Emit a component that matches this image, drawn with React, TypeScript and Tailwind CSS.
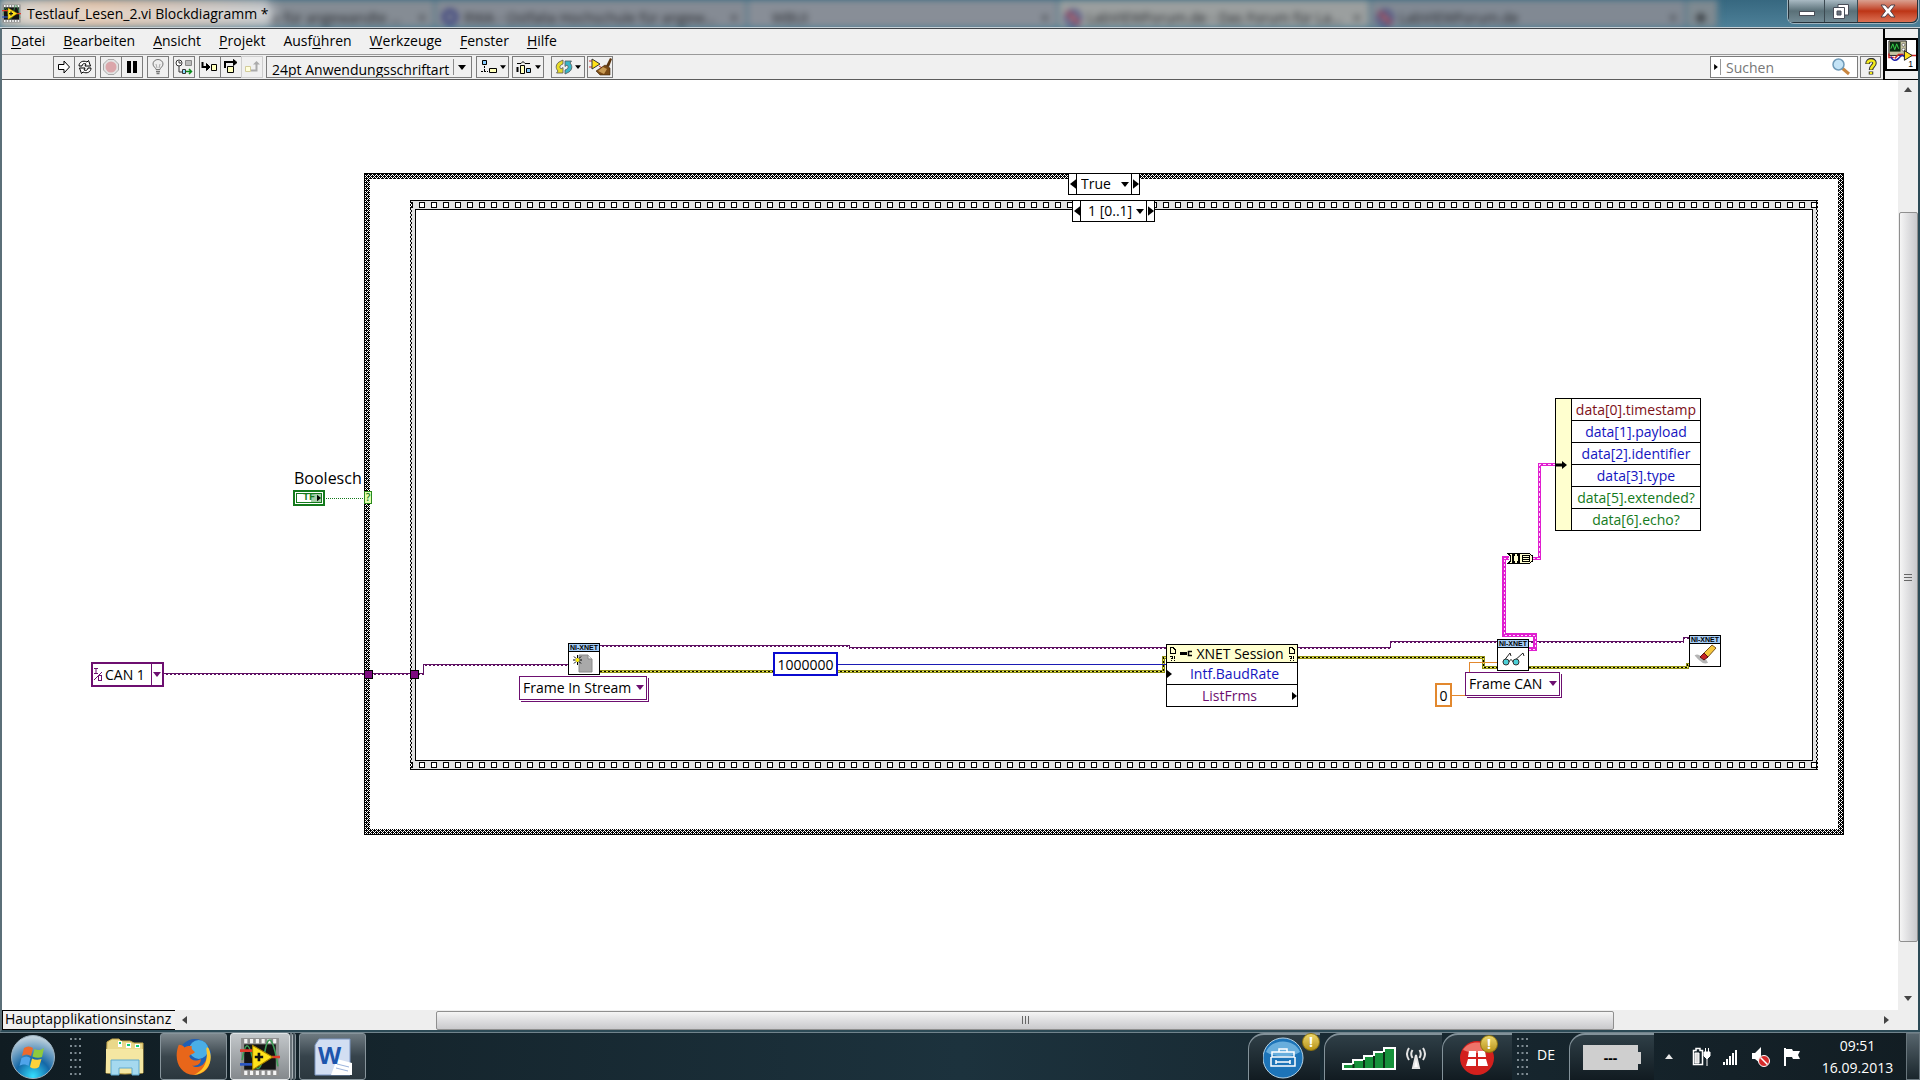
import type { ReactNode } from 'react';
import clsx from 'clsx';

const PURPLE = '#6d0f70';

const menus = [
  ['', 'D', 'atei'],
  ['', 'B', 'earbeiten'],
  ['', 'A', 'nsicht'],
  ['', 'P', 'rojekt'],
  ['Ausf', 'ü', 'hren'],
  ['', 'W', 'erkzeuge'],
  ['', 'F', 'enster'],
  ['', 'H', 'ilfe'],
];

const fields = [
  { name: 'data[0].timestamp', color: 'text-[#7d1018]' },
  { name: 'data[1].payload', color: 'text-[#1414c0]' },
  { name: 'data[2].identifier', color: 'text-[#1414c0]' },
  { name: 'data[3].type', color: 'text-[#1414c0]' },
  { name: 'data[5].extended?', color: 'text-[#147a1c]' },
  { name: 'data[6].echo?', color: 'text-[#147a1c]' },
];

function Tri({ dir, className }: { dir: 'up' | 'down' | 'left' | 'right'; className?: string }) {
  const d = {
    up: 'M0 5 L4 0 L8 5Z',
    down: 'M0 0 L8 0 L4 5Z',
    left: 'M5 0 L0 4 L5 8Z',
    right: 'M0 0 L5 4 L0 8Z',
  }[dir];
  const wide = dir === 'up' || dir === 'down';
  return (
    <svg
      width={wide ? 8 : 5}
      height={wide ? 5 : 8}
      viewBox={wide ? '0 0 8 5' : '0 0 5 8'}
      className={clsx('shrink-0', className)}
      fill="currentColor"
    >
      <path d={d} />
    </svg>
  );
}

function LabViewIcon({ size }: { size: number }) {
  return (
    <svg width={size} height={size} viewBox="0 0 38 38" className="shrink-0">
      <rect x="1" y="1" width="36" height="36" fill="#8d8d8d" />
      <rect x="4" y="7" width="30" height="24" fill="#141414" />
      <path d="M4 4H36M4 34H36" stroke="#f4f4f4" strokeWidth="4" strokeDasharray="3 2.5" />
      <path d="M2 22C5 4 8 4 12 20S20 32 24 12S33 8 36 28" stroke="#3e9c57" strokeWidth="1.5" fill="none" />
      <path d="M0 13H12M30 19H38" stroke="#e03a2c" strokeWidth="2.5" />
      <path d="M0 26H12" stroke="#2b56c4" strokeWidth="2.5" />
      <path d="M12 8V31L31 19Z" fill="#ffe21a" stroke="#a88400" />
      <path d="M14 19H22M18 15V23" stroke="#111" strokeWidth="2.5" />
    </svg>
  );
}

/* ---------- title bar ---------- */

function BrowserMark() {
  return (
    <svg width="20" height="18" viewBox="0 0 20 18" className="shrink-0">
      <circle cx="10" cy="9" r="7" fill="none" stroke="#3a3c7c" strokeWidth="3" />
      <path d="M4 3 16 15" stroke="#a04358" strokeWidth="4" />
    </svg>
  );
}

function BrowserTab({ label, className, icon, close = true }: { label: string; className: string; icon?: ReactNode; close?: boolean }) {
  return (
    <div className={clsx('flex h-[27px] shrink-0 items-center gap-1 overflow-hidden border-r-2 border-[#4b7488] px-1 pt-2', className)}>
      {icon}
      <span className="grow whitespace-nowrap">{label}</span>
      {close && <span className="pr-1">×</span>}
    </div>
  );
}

function TitleBar() {
  return (
    <header className="relative flex h-7 shrink-0 items-center overflow-hidden border-b border-[#c8d2d8] bg-linear-to-b from-[#376880] to-[#4d8098]">
      <div aria-hidden className="absolute inset-0 flex items-end text-[14px] text-[#23262b] blur-[3px]">
        <div className="h-7 w-[268px] shrink-0 bg-linear-to-r from-[#b9b9b5] via-[#d0ab8c] via-35% to-[#a0a6ab]" />
        <BrowserTab className="w-[168px] bg-[#858c94]" label="e für angewandte ..." />
        <BrowserTab
          className="w-[312px] bg-[#858b94]"
          label="RWA - Ostfalia Hochschule für angew..."
          icon={<svg width="20" height="18" className="shrink-0"><circle cx="10" cy="8" r="6" fill="none" stroke="#343a7c" strokeWidth="4" /></svg>}
        />
        <BrowserTab className="w-[311px] bg-[#888e97] pl-6" label="WBUI" />
        <BrowserTab className="w-[312px] bg-[#9b9f9f]" label="LabVIEWForum.de - Das Forum für La..." icon={<BrowserMark />} />
        <BrowserTab className="w-[316px] bg-[#818993]" label="LabVIEWForum.de" icon={<BrowserMark />} />
        <BrowserTab className="w-[32px] bg-[#7f8a91] pl-2" label="✚" close={false} />
      </div>
      <div className="absolute top-1 left-4 h-5 w-[260px] rounded-full bg-white/50 blur-[6px]" />
      <div className="relative flex items-center gap-1 pl-0.5 text-[14px] leading-5 text-black">
        <LabViewIcon size={19} />
        <h1 className="pl-0.5">Testlauf_Lesen_2.vi Blockdiagramm *</h1>
      </div>
      <div className="relative mr-0.5 ml-auto flex h-[23px] self-start rounded-b-md border border-t-0 border-[#26323a] shadow-[0_0_0_1px_#9fb4bf]">
        <button aria-label="Minimieren" className="flex w-9 items-end justify-center border-r border-[#3c4a52] bg-linear-to-b from-[#a9bac3] via-[#5a7078] to-[#728a94] pb-1.5">
          <span className="h-[5px] w-4 border border-[#4a4f58] bg-white" />
        </button>
        <button aria-label="Wiederherstellen" className="flex w-[33px] items-center justify-center border-r border-[#3c4a52] bg-linear-to-b from-[#a9bac3] via-[#5a7078] to-[#728a94]">
          <svg width="18" height="17" fill="none">
            <path d="M6 1.500H16.500V12H6Z" fill="#fff" stroke="#484d58" />
            <path d="M1.500 4.500H12.500V15.500H1.500Z" fill="#fff" stroke="#484d58" />
            <path d="M5 8H9V12H5Z" fill="#68727c" stroke="#484d58" />
          </svg>
        </button>
        <button aria-label="Schließen" className="flex w-[59px] items-center justify-center rounded-br-md bg-linear-to-b from-[#d9a090] via-[#bd3414] to-[#dc7052]">
          <svg width="16" height="14" viewBox="0 0 16 14">
            <path d="M1 1H5L8 4.500 11 1H15L10.500 7 15 13H11L8 9.500 5 13H1L5.500 7Z" fill="#fff" stroke="#4d4048" />
          </svg>
        </button>
      </div>
    </header>
  );
}

/* ---------- menu and toolbar ---------- */

function ToolButton({ label, className, children }: { label: string; className?: string; children: ReactNode }) {
  return (
    <button aria-label={label} className={clsx('flex h-[22px] items-center justify-center gap-0.5 border border-[#7c7c7c] bg-[#f0f0f0]', className)}>
      {children}
    </button>
  );
}

function Toolbar() {
  return (
    <div className="flex h-[25px] items-center border-b border-[#5c5c5c] pl-[51px]">
      <ToolButton label="Ausführen" className="w-[22px]">
        <svg width="14" height="14" fill="#fff" stroke="#000"><path d="M1.500 4.500H7V1L12.500 7 7 13V9.500H1.500Z" /></svg>
      </ToolButton>
      <ToolButton label="Wiederholt ausführen" className="-ml-px w-[22px]">
        <svg width="16" height="16" fill="#fff" stroke="#000">
          <path d="M2 7C2 3 6 1 10 3L11.500 1.500 13.500 7H8L9 5C7 4 5 5 5 7Z" />
          <path d="M14 9C14 13 10 15 6 13L4.500 14.500 2.500 9H8L7 11C9 12 11 11 11 9Z" />
        </svg>
      </ToolButton>
      <ToolButton label="Abbrechen" className="ml-1 w-[22px]">
        <svg width="16" height="16"><path d="M5 .500H11L15.500 5V11L11 15.500H5L.500 11V5Z" fill="#e2e2e2" stroke="#a9a9a9" /><circle cx="8" cy="8" r="5.500" fill="#dba6aa" /></svg>
      </ToolButton>
      <ToolButton label="Pause" className="-ml-px w-[22px]">
        <svg width="10" height="12"><path d="M0 0H4V12H0ZM6 0H10V12H6Z" /></svg>
      </ToolButton>
      <ToolButton label="Highlight-Funktion" className="ml-1 w-[22px]">
        <svg width="12" height="16" stroke="#777"><path d="M4 10.500C4 8.500 1 8 1 5A5 4.500 0 0 1 11 5C11 8 8 8.500 8 10.500Z" fill="#eee" /><path d="M4 12.500H8M4.500 14.500H7.500" strokeWidth="1.500" /><path d="M4 5 5 9M8 5 7 9" stroke="#aaa" /></svg>
      </ToolButton>
      <ToolButton label="Verbindungswerte beibehalten" className="ml-1 w-[22px]">
        <svg width="18" height="16" fill="none" stroke="#333">
          <circle cx="4" cy="4" r="3" fill="#fff" /><path d="M4 2V4H6M4 7V13H7" /><path d="M10.500 1.500H16.500V6.500H10.500Z" fill="#bbb" stroke="#888" />
          <path d="M7.500 10.500H10.500V14.500H7.500Z" fill="#8df" /><path d="M11 12.500H16M14 10L16.500 12.500 14 15" stroke="#0a8a1a" strokeWidth="1.500" />
        </svg>
      </ToolButton>
      <ToolButton label="Hineinspringen" className="ml-1 w-[22px]">
        <svg width="18" height="14" fill="none" stroke="#000"><path d="M1.500 2V7H7" strokeWidth="2" /><path d="M5.500 3.500 9 7 5.500 10.500Z" fill="#000" /><path d="M10.500 4.500H15.500V10.500H10.500Z" fill="#ffb" /></svg>
      </ToolButton>
      <ToolButton label="Überspringen" className="-ml-px w-[22px]">
        <svg width="16" height="16" fill="none" stroke="#000"><path d="M2 9V3H11" strokeWidth="2" /><path d="M10.500 .500 14 3.500 10.500 6.500Z" fill="#000" /><path d="M4.500 7.500H10.500V13.500H4.500Z" fill="#ffb" /></svg>
      </ToolButton>
      <ToolButton label="Herausspringen" className="-ml-px w-[22px] border-[#cdcdcd]">
        <svg width="16" height="14" fill="none" stroke="#aaa"><path d="M1.500 6.500H6.500V11.500H1.500Z" fill="#ffd" stroke="#d3cc9a" /><path d="M7 10.500H12.500V4" strokeWidth="2" /><path d="M9 4.500 12.500 1 16 4.500Z" fill="#aaa" stroke="none" /></svg>
      </ToolButton>
      <div className="relative ml-[3px] h-[22px] w-[206px] overflow-hidden border border-[#7c7c7c] bg-[#f0f0f0]">
        <select aria-label="Schriftart" className="h-6 w-full appearance-none pt-0.5 pl-[5px] text-[14px] leading-5 outline-none">
          <option>24pt Anwendungsschriftart</option>
        </select>
        <span className="pointer-events-none absolute inset-y-0.5 right-0 flex w-[18px] items-center border-l border-[#8c8c8c] pl-1"><Tri dir="down" /></span>
      </div>
      <ToolButton label="Objekte ausrichten" className="ml-1 w-[33px]">
        <svg width="18" height="16" stroke="#000" fill="none"><path d="M2.500 1.500H6.500V5.500H2.500Z" fill="#8cf" /><path d="M4.500 7V13M1 12.500H8" strokeDasharray="2 1" /><path d="M9.500 9.500H16.500V13.500H9.500Z" fill="#ffb" /></svg>
        <Tri dir="down" className="h-1 w-1.5" />
      </ToolButton>
      <ToolButton label="Objekte einreihen" className="ml-[3px] w-8">
        <svg width="18" height="16" stroke="#000" fill="none"><path d="M2 4.500H6L8 2.500 10 4.500H15" /><path d="M2.500 8V13" strokeWidth="2" /><path d="M5.500 6.500H9.500V14.500H5.500Z" fill="#ffb" /><path d="M11.500 9.500H15.500V13.500H11.500Z" fill="#8cf" /></svg>
        <Tri dir="down" className="h-1 w-1.5" />
      </ToolButton>
      <ToolButton label="Neu anordnen" className="ml-[7px] w-[34px]">
        <svg width="18" height="16" stroke="#555" strokeWidth=".8">
          <path d="M8 1 4 3C1 5 0 9 3 12L1.500 14H8V8.500L6 10C4 8 5 6 8 5Z" fill="#e8dc2a" />
          <path d="M10 15 14 13C17 11 18 7 15 4L16.500 2H10V7.500L12 6C14 8 13 10 10 11Z" fill="#38b6c8" />
        </svg>
        <Tri dir="down" className="h-1 w-1.5" />
      </ToolButton>
      <ToolButton label="Diagramm aufräumen" className="ml-0.5 w-[26px]">
        <svg width="23" height="18"><path d="M0 3H6M0 9H5M10 8 20 14" stroke="#c33" /><path d="M17 8 21 0 23 1 20 9Z" fill="#5b350e" /><path d="M10 11 16 7 21 10 21 17 11 17 7 13Z" fill="#7a4a14" stroke="#3d2409" strokeWidth=".6" /><path d="M9 13 14 9 18 11 15 16Z" fill="#c89a52" /><path d="M3 1 11 6 3 11Z" fill="#ffe21a" stroke="#333" /></svg>
      </ToolButton>
      <form role="search" className="ml-auto flex items-center">
        <div className="flex h-[22px] w-[148px] items-center border border-[#7c7c7c] bg-white">
          <span className="flex h-4 w-2.5 items-center justify-center border-r border-[#999]"><Tri dir="right" className="h-1.5 w-1" /></span>
          <input aria-label="Suchen" placeholder="Suchen" className="w-0 grow pt-0.5 pl-[5px] text-[14px] leading-5 outline-none placeholder:text-[#777]" />
          <svg width="20" height="18" className="mr-1.5"><path d="M11 10 18 16" stroke="#c98640" strokeWidth="3" /><circle cx="7.500" cy="6.500" r="5.500" fill="#c3e3f6" stroke="#6f9ab8" strokeWidth="1.500" /></svg>
        </div>
        <button type="button" aria-label="Kontexthilfe" className="mx-0.5 flex h-[22px] w-[21px] items-center justify-center border border-[#7c7c7c]">
          <svg width="12" height="18" fill="none"><path d="M2.500 6C2.500 1 9.500 1 9.500 5 9.500 8 6 8 6 12M6 13.500V16.500" stroke="#333" strokeWidth="4.500" /><path d="M2.500 5.500C2.500 1.500 9.500 1.500 9.500 5 9.500 8 6 8 6 11.500M6 14V16" stroke="#f2ea1c" strokeWidth="2.500" /></svg>
        </button>
      </form>
    </div>
  );
}

function MenuArea() {
  return (
    <div className="flex shrink-0 border-t border-[#3f4449] bg-[#f0f0f0]">
      <div className="grow">
        <nav className="flex h-[26px] items-center border-b border-[#9a9a9a] pb-0.5">
          {menus.map(([pre, key, post]) => (
            <button key={key} className="px-[9px] text-[14px] leading-5">{pre}<span className="underline underline-offset-2">{key}</span>{post}</button>
          ))}
        </nav>
        <Toolbar />
      </div>
      <div className="flex w-[35px] items-center border-b border-l-2 border-black">
        <svg width="33" height="33" className="border-2 border-black bg-white" viewBox="0 0 30 30">
          <path d="M2 1H20V16H2Z" fill="#c6c3a2" stroke="#222" />
          <path d="M3 2H14V12H3Z" fill="#0a2a12" />
          <path d="M4 9 6 4 8 10 10 4 12 9" stroke="#37d24a" fill="none" />
          <circle cx="17" cy="5" r="1.500" fill="#fff" stroke="#222" strokeWidth=".5" /><circle cx="17" cy="10" r="1.500" fill="#fff" stroke="#222" strokeWidth=".5" />
          <path d="M2 14V18H7M20 16H30M8 19 12 15 17 15" stroke="#c22" fill="none" strokeWidth="1.500" />
          <path d="M4 17C6 22 9 22 12 19S15 15 18 17" stroke="#22a" fill="none" strokeWidth="1.500" />
          <path d="M18 11V21L26 16Z" fill="#ffe21a" stroke="#222" />
          <text x="22" y="28" fontSize="9" fontFamily="Liberation Sans">1</text>
        </svg>
      </div>
    </div>
  );
}

/* ---------- block diagram ---------- */

function Wire({ d, kind }: { d: string; kind: 'session' | 'error' | 'cluster' | 'cluster-thin' }) {
  if (kind === 'session') {
    return (
      <g fill="none" stroke="#5e1062" strokeWidth="1">
        <path d={d} />
        <path d={d} strokeDasharray="2 2" strokeDashoffset="2" transform="translate(0 1)" />
      </g>
    );
  }
  if (kind === 'error') {
    return (
      <g fill="none">
        <path d={d} stroke="#8f8e14" strokeWidth="3" />
        <path d={d} stroke="#e6e65a" strokeWidth="1" />
        <path d={d} stroke="#000" strokeWidth="1" strokeDasharray="2 2" />
      </g>
    );
  }
  return (
    <g fill="none">
      <path d={d} stroke="#e01fd0" strokeWidth={kind === 'cluster' ? 4 : 3} />
      <path d={d} stroke="#ffd9fb" strokeWidth="1" strokeDasharray={kind === 'cluster' ? '2 2' : '3 2'} />
    </g>
  );
}

function Wires() {
  return (
    <svg width="1900" height="800" className="pointer-events-none absolute top-0 left-0" shapeRendering="crispEdges">
      <path d="M326 418.500H364" stroke="#147a1c" strokeDasharray="1 1" />
      <Wire kind="session" d="M164 593.500H423.500V584.500H568" />
      <rect x="364.500" y="590.500" width="8" height="8" fill="#7d0a80" stroke="#000" />
      <rect x="410.500" y="590.500" width="8" height="8" fill="#7d0a80" stroke="#000" />
      <Wire kind="session" d="M600 565.500H849.500V567.500H1166" />
      <Wire kind="error" d="M600 591.500H1163.500V577.500H1166" />
      <path d="M838 584.500H1166" stroke="#1b1bb4" />
      <Wire kind="session" d="M1298 567.500H1390.500V561.500H1497" />
      <Wire kind="error" d="M1298 577.500H1483.500V587.500H1497" />
      <Wire kind="session" d="M1529 561.500H1683.500V557.500H1689" />
      <Wire kind="error" d="M1529 587.500H1687.500V584.500H1689" />
      <path d="M1452 615.500H1469.500V582.500H1497" stroke="#e2882e" fill="none" />
      <Wire kind="cluster" d="M1529 569H1535V555H1504V478H1509" />
      <Wire kind="cluster-thin" d="M1532 478.500H1539.500V384.500H1555" />
      <path d="M1508 473.500H1529L1532.500 476V481L1529 483.500H1508L1510.500 481V476Z" fill="#ffffcf" stroke="#000" />
      <path d="M1515 475H1513V482H1515M1517 475H1519V482H1517" fill="none" stroke="#000" strokeWidth="2" />
      <path d="M1522.500 475.500H1529.500V481.500H1522.500ZM1522 477.500H1530M1522 479.500H1530" fill="none" stroke="#000" />
    </svg>
  );
}

function Structures() {
  return (
    <svg width="1900" height="800" className="pointer-events-none absolute top-0 left-0" shapeRendering="crispEdges">
      <defs>
        <pattern id="hatch" width="4" height="4" patternUnits="userSpaceOnUse">
          <rect width="4" height="4" fill="#fff" />
          <path d="M0 0H2V1H0ZM3 0H4V1H3ZM0 1H1V2H0ZM2 1H3V2H2ZM1 2H4V3H1ZM0 3H1V4H0ZM2 3H3V4H2Z" />
        </pattern>
        <pattern id="film-top" x="419" y="120" width="12" height="10" patternUnits="userSpaceOnUse">
          <rect x=".5" y="2.500" width="5" height="5" fill="#fff" stroke="#000" />
        </pattern>
        <pattern id="film-bottom" x="419" y="680" width="12" height="10" patternUnits="userSpaceOnUse">
          <rect x=".5" y="2.500" width="5" height="5" fill="#fff" stroke="#000" />
        </pattern>
      </defs>
      <rect x="367" y="96" width="1474" height="656" fill="none" stroke="url(#hatch)" strokeWidth="6" />
      <rect x="364.500" y="93.500" width="1479" height="661" fill="none" stroke="#000" />
      <path d="M410 120H1818V130H410ZM410 680H1818V690H410ZM410 130H416V680H410ZM1812 130H1818V680H1812Z" fill="#e1e1e1" />
      <rect x="410" y="120" width="1408" height="10" fill="url(#film-top)" />
      <rect x="410" y="680" width="1408" height="10" fill="url(#film-bottom)" />
      <path d="M410 120.500H1818M410 689.500H1818" stroke="#000" />
      <rect x="415.500" y="129.500" width="1397" height="551" fill="none" stroke="#000" />
      <path d="M410.500 120V690M1816.500 120V690" stroke="#000" strokeDasharray="2 2" />
      <path d="M411.500 122V690M1817.500 122V690" stroke="#000" strokeDasharray="2 2" />
    </svg>
  );
}

function Selector({ label, value, className, pad }: { label: string; value: string; className: string; pad: string }) {
  return (
    <div className={clsx('absolute flex h-[22px] border border-black bg-white', className)}>
      <button aria-label="Vorheriger Rahmen" className="flex w-[7px] items-center justify-center"><Tri dir="left" className="h-2.5 w-1.5" /></button>
      <div className="relative grow border-x border-black">
        <select aria-label={label} className={clsx('block h-5 w-full appearance-none text-[14px] leading-[18px] outline-none', pad)}><option>{value}</option></select>
        <Tri dir="down" className="pointer-events-none absolute top-2 right-0.5" />
      </div>
      <button aria-label="Nächster Rahmen" className="flex w-[7px] items-center justify-center"><Tri dir="right" className="h-2.5 w-1.5" /></button>
    </div>
  );
}

function EnumConstant({ label, value, className }: { label: string; value: string; className: string }) {
  return (
    <div className={clsx('absolute h-6 border border-[#6d0f70] bg-white shadow-[1px_1px_0_#fff,2px_2px_0_#6d0f70]', className)}>
      <select aria-label={label} className="block h-[22px] w-full appearance-none pl-[3px] text-[14px] leading-5 outline-none"><option>{value}</option></select>
      <Tri dir="down" className="pointer-events-none absolute top-2 right-0.5 text-[#6d0f70]" />
    </div>
  );
}

function XnetNode({ className, children }: { className: string; children: ReactNode }) {
  return (
    <div className={clsx('absolute flex h-8 w-8 flex-col border border-black bg-white', className)}>
      <span className="h-2 border-b border-black bg-[#a5cdf6] text-center font-['Liberation_Sans',sans-serif] text-[7px] leading-[7px] font-bold">NI-XNET</span>
      <svg width="30" height="22" viewBox="0 0 30 22">{children}</svg>
    </div>
  );
}

function DocMark() {
  return (
    <svg width="7" height="14" fill="none" stroke="#000" shapeRendering="crispEdges">
      <path d="M1.500 .500H4L6.500 3V6.500H1.500ZM1 9.500H3.500V11H2.500V12M2.500 13V14M5.500 9V12M5.500 13V14" />
    </svg>
  );
}

function Diagram() {
  return (
    <main className="relative grow overflow-hidden bg-white">
      <div className="absolute inset-y-0 right-0 -left-0.5">
        <Structures />
        <Wires />
        <Selector label="Case" value="True" pad="pl-1" className="top-[93px] left-[1068px] w-[72px]" />
        <Selector label="Sequenz" value="1 [0..1]" pad="pl-[7px]" className="top-[120px] left-[1072px] w-[83px]" />

        <div className="absolute top-[386px] left-[293px] flex flex-col">
          <span className="pl-px text-[16px] leading-6">Boolesch</span>
          <span className="flex h-4 w-8 border-2 border-[#147a1c] p-px">
            <span className="flex grow items-center justify-end border border-[#147a1c] bg-linear-to-r from-white from-60% to-[#a6cfa8] to-60% font-['Liberation_Mono',monospace] text-[10px] leading-2 font-bold text-[#147a1c]">TF<Tri dir="right" className="ml-0.5 w-1 text-black" /></span>
          </span>
        </div>
        <span className="absolute top-[411px] left-[364px] flex h-[13px] w-2 items-center justify-center border border-[#2a8a1c] bg-[#e2ffb0] text-[10px] font-semibold text-[#147a1c]">?</span>

        <div className="absolute top-[582px] left-[91px] flex h-[25px] w-[73px] items-center border-2 border-[#6d0f70] bg-white">
          <svg width="10" height="16" className="shrink-0" fill="none" stroke={PURPLE}><path d="M1 1.500H5M3 1.500V7M1 6.500H5M1 13 9 5" /><rect x="5.500" y="8.500" width="3" height="5" /></svg>
          <select aria-label="XNET-Interface" className="h-full w-0 grow appearance-none pl-0.5 text-[14px] leading-5 outline-none"><option>CAN 1</option></select>
          <span className="flex h-full w-[11px] items-center justify-center border-l border-[#6d0f70] text-[#6d0f70]"><Tri dir="down" /></span>
        </div>

        <XnetNode className="top-[563px] left-[568px]">
          <path d="M10 3H19L23 7V20H10Z" fill="#a9a9a9" stroke="#8a8a8a" /><path d="M19 3V7H23" fill="#eee" stroke="#888" />
          <circle cx="8.500" cy="8" r="2" fill="#fff200" /><path d="M8.500 3V6M8.500 10V13M4 8H6.500M10.500 8H13M5 4.500 7 6.500M12 4.500 10 6.500M5 11.500 7 9.500M12 11.500 10 9.500" stroke="#000" />
        </XnetNode>
        <EnumConstant label="Modus" value="Frame In Stream" className="top-[596px] left-[519px] w-32" />
        <input aria-label="Baudrate" defaultValue="1000000" className="absolute top-[572px] left-[773px] h-6 w-[65px] border-2 border-[#0b0bd0] bg-white text-center text-[14px] leading-5 outline-none" />

        <div className="absolute top-[564px] left-[1166px] w-[132px] border border-black bg-white text-center text-[14px]">
          <div className="flex h-[17px] items-center justify-between bg-[#ffffcf] px-0.5">
            <DocMark />
            <span className="flex items-center gap-1 leading-[17px]">
              <svg width="12" height="7" fill="none" stroke="#000"><path d="M0 3.500H7" strokeWidth="3" /><path d="M12 1.500H8.500V5.500H12" strokeWidth="1.500" /></svg>
              XNET Session
            </span>
            <DocMark />
          </div>
          <div className="flex h-[22px] items-center border-t border-black leading-5 text-[#1414c0]"><Tri dir="right" className="text-black" /><span className="grow">Intf.BaudRate</span></div>
          <div className="flex h-[22px] items-center border-t border-black leading-5 text-[#6d0f70]"><span className="grow">ListFrms</span><Tri dir="right" className="text-black" /></div>
        </div>

        <XnetNode className="top-[559px] left-[1497px]">
          <path d="M5 14 12 5 13 8M15 14 25 5 26 8M11 14C12 11 14 11 15 14" stroke="#222" fill="none" />
          <circle cx="8" cy="14" r="3" fill="#4ccfd6" stroke="#333" /><circle cx="18" cy="14" r="3" fill="#4ccfd6" stroke="#333" />
        </XnetNode>
        <EnumConstant label="Frametyp" value="Frame CAN" className="top-[592px] left-[1465px] w-[95px]" />
        <input aria-label="Timeout" defaultValue="0" className="absolute top-[603px] left-[1435px] h-6 w-[17px] border-2 border-[#e2882e] bg-white text-center text-[14px] leading-5 outline-none" />
        <XnetNode className="top-[555px] left-[1689px]">
          <path d="M6 13C9 10 12 20 17 17" stroke="#b5b5b5" strokeWidth="4" fill="none" />
          <path d="M13 10 22 1 26 4 17 14Z" fill="#f5c63c" stroke="#79541a" /><path d="M10 13 14 9 18 13 14 16Z" fill="#c62323" stroke="#5b1111" />
        </XnetNode>

        <div className="absolute top-[318px] left-[1555px] flex w-[146px] border border-black bg-white">
          <div className="flex w-4 items-center border-r border-black bg-[#ffffcf]">
            <svg width="11" height="8"><path d="M0 2.500H6V0L11 4 6 8V5.500H0Z" /></svg>
          </div>
          <ul className="grow divide-y divide-black text-center text-[14px] leading-[21px]">
            {fields.map((f) => <li key={f.name} className={f.color}>{f.name}</li>)}
          </ul>
        </div>
      </div>
    </main>
  );
}

/* ---------- scroll bars ---------- */

function VerticalScroll() {
  return (
    <div className="flex w-5 shrink-0 flex-col items-center bg-[#eeeeee] text-[#444]">
      <button aria-label="Nach oben" className="flex h-[19px] w-full items-center justify-center"><Tri dir="up" /></button>
      <div className="h-[113px] shrink" />
      <div className="flex h-[730px] w-[19px] shrink flex-col items-center justify-center gap-0.5 rounded-[2px] border border-[#8f8f8f] bg-linear-to-r from-[#f5f5f5] via-[#dedee0] to-[#c9c9cc]">
        <span className="h-px w-2 bg-[#666]" /><span className="h-px w-2 bg-[#666]" /><span className="h-px w-2 bg-[#666]" />
      </div>
      <button aria-label="Nach unten" className="mt-auto flex h-6 w-full items-center justify-center"><Tri dir="down" /></button>
    </div>
  );
}

function StatusBar() {
  return (
    <div className="flex h-5 shrink-0 items-center bg-[#eeeeee] text-[#444]">
      <span className="flex h-full w-[173px] shrink-0 items-center border border-r-0 border-black bg-[#f0f0f0] pb-0.5 pl-0.5 text-[14px] leading-4 text-black">Hauptapplikationsinstanz</span>
      <button aria-label="Nach links" className="flex w-[19px] shrink-0 justify-center"><Tri dir="left" /></button>
      <div className="flex grow">
        <div className="basis-[242px]" />
        <div className="flex h-[19px] basis-[1178px] items-center justify-center gap-0.5 rounded-[2px] border border-[#8f8f8f] bg-linear-to-b from-[#f5f5f5] via-[#dedee0] to-[#c9c9cc]">
          <span className="h-2 w-px bg-[#666]" /><span className="h-2 w-px bg-[#666]" /><span className="h-2 w-px bg-[#666]" />
        </div>
      </div>
      <button aria-label="Nach rechts" className="flex w-[19px] shrink-0 justify-center"><Tri dir="right" /></button>
      <div className="w-[22px] shrink-0" />
    </div>
  );
}

/* ---------- taskbar ---------- */

function Grip() {
  return (
    <svg width="12" height="40" className="shrink-0"><path d="M1 1V40M5.500 1V40M10 1V40" stroke="#7d8a91" strokeWidth="2" strokeDasharray="2 5" /></svg>
  );
}

function Badge({ className }: { className: string }) {
  return <span className={clsx('absolute flex size-[18px] items-center justify-center rounded-full border border-[#8f7410] bg-linear-to-b from-[#ecd669] to-[#b99410] text-[14px] leading-4 font-bold text-white', className)}>!</span>;
}

function Panel({ className, children }: { className: string; children: ReactNode }) {
  return <div className={clsx('relative flex h-full items-center justify-center rounded-tl-2xl border-t-2 border-l border-[#83929a] bg-linear-to-b from-[#2f3f47] to-[#111b21]', className)}>{children}</div>;
}

function TaskButton({ label, className, children }: { label: string; className: string; children: ReactNode }) {
  return <button aria-label={label} className={clsx('flex h-full shrink-0 items-center justify-center rounded-[3px] border', className)}>{children}</button>;
}

function Taskbar() {
  return (
    <footer className="flex h-12 shrink-0 border-t border-[#71838c] bg-linear-to-r from-[#101c22] via-[#1c323d] to-[#121d23] text-white">
      <button aria-label="Start" className="ml-2.5 flex shrink-0 items-center">
        <svg width="46" height="46">
          <defs>
            <radialGradient id="orb" cx=".5" cy=".95" r=".9"><stop offset="0" stopColor="#33e0ff" /><stop offset=".45" stopColor="#1467a6" /><stop offset="1" stopColor="#bdd0dc" /></radialGradient>
          </defs>
          <circle cx="23" cy="23" r="21.500" fill="url(#orb)" stroke="#9fb4c2" />
          <path d="M14 14C17 12 20 12 23 14L21 22C18 20 15 20 12 22Z" fill="#ee6a2c" />
          <path d="M24.500 15C28 17 31 16 34 14L32 23C29 24 26 24 22.500 22.500Z" fill="#8fca3e" />
          <path d="M11.500 24C15 22 18 22 20.500 24L18.500 32C16 30 12 30 9.500 32Z" fill="#4fa4ea" />
          <path d="M22 24.500C25 26 28 26 31.500 25L29 33C26 35 23 35 20 33Z" fill="#ffd23a" />
        </svg>
      </button>
      <div className="flex items-center pl-3.5"><Grip /></div>
      <TaskButton label="Windows-Explorer" className="ml-2 w-[70px] border-transparent">
        <svg width="42" height="40">
          <path d="M3 5 8 2H15L17 4H26L30 6H39V36L21 37 2 36Z" fill="#ead88a" stroke="#c2a54c" />
          <path d="M14 4H18V10H14ZM22 6H27V11H22ZM31 7H36V11H31Z" fill="#fff" /><path d="M15 6H17M23 8H26M32 9H35" stroke="#1c7" strokeWidth="2" />
          <path d="M2 12H39V36H2Z" fill="#f5e7a2" /><path d="M7 23H35V38H28V31H15V38H7Z" fill="#a5d9ef" stroke="#5fa9cf" />
        </svg>
      </TaskButton>
      <TaskButton label="Firefox" className="w-[67px] border-[#87949b] bg-linear-to-b from-[#7d878d] via-[#3a464d] to-[#2b373e]">
        <svg width="38" height="38" viewBox="0 0 40 40">
          <circle cx="21" cy="18" r="17" fill="#1f5fb5" /><circle cx="25" cy="12" r="10" fill="#4aaee6" />
          <path d="M4 7C7 7 9 8 10 10 13 8 17 8 18 9 16 12 20 13 21 15 19 17 16 17 15 19 16 24 23 25 27 22 28 28 22 30 18 29 25 34 35 27 34 14 40 22 37 38 20 39 4 38-2 22 4 7Z" fill="#e8661a" />
          <path d="M36 12C41 25 34 37 20 39 31 34 35 24 33 12 33 9 35 9 36 12Z" fill="#ffc62b" />
        </svg>
      </TaskButton>
      <TaskButton label="LabVIEW" className="ml-[3px] w-[60px] border-[#dfe3e5] bg-linear-to-b from-[#c3c7ca] to-[#84898d]"><LabViewIcon size={40} /></TaskButton>
      <span className="h-full w-[3px] rounded-r border-r border-[#aab2b7] bg-[#6b757b]" />
      <span className="h-full w-[3px] rounded-r border-r border-[#87949b] bg-[#45525a]" />
      <TaskButton label="Word" className="ml-[3px] w-[67px] border-[#87949b] bg-linear-to-b from-[#6e7a81] via-[#36434b] to-[#2b373e]">
        <svg width="40" height="40">
          <path d="M6 2H37V38H2V8Z" fill="#d2def2" stroke="#7d97c4" /><path d="M24 22 39 26V38H18Z" fill="#fff" /><path d="M24 27 36 30M23 31 35 34" stroke="#9bb3dc" />
          <text x="5" y="27" fontSize="24" fontWeight="700" fontFamily="Open Sans" fill="#1d55ad">W</text>
        </svg>
      </TaskButton>

      <div className="ml-auto flex shrink-0 items-center">
        <Panel className="w-[72px]">
          <svg width="42" height="44" className="mr-0.5"><circle cx="20" cy="22" r="20" fill="#1d74b8" stroke="#b4d0e2" /><path d="M3 16C8 2 32 2 37 16 28 22 12 22 3 16Z" fill="#68aedd" />
            <path d="M9 16H31V21H9ZM16 16V13H24V16M8 21V30H32V21M13 26H27M13 24V28M27 24V28" stroke="#fff" strokeWidth="1.500" fill="none" />
          </svg>
          <Badge className="-top-0.5 right-0" />
        </Panel>
        <Panel className="ml-1 w-[118px] gap-2.5">
          <svg width="54" height="24"><path d="M1 18H11V14H22V10H32V6H42V2H53V23H1Z" fill="#16913a" stroke="#fff" strokeWidth="2" /><path d="M11.500 18V22M22 14V22M32 10V22M42 6V22" stroke="#0a2d14" strokeWidth="2" /></svg>
          <svg width="20" height="22" fill="none" stroke="#e4e4e4" strokeWidth="2"><path d="M7 21 10 8 13 21Z" fill="#fff" /><path d="M6.500 3Q4 7 6.500 11M13.500 3Q16 7 13.500 11M3 1Q-1 7 3 13M17 1Q21 7 17 13" /></svg>
        </Panel>
        <Panel className="w-[70px]">
          <svg width="36" height="44"><circle cx="17" cy="22" r="17" fill="#d3201d" /><path d="M3 14C8 4 26 4 31 14 22 18 12 18 3 14Z" fill="#ee746a" /><path d="M9 15H16V21H8ZM18 15H25L26 21H18ZM8 23H16V30H6ZM18 23H26L28 30H18Z" fill="#fff" /></svg>
          <Badge className="top-0 right-3.5" />
        </Panel>
        <div className="pl-[5px]"><Grip /></div>
        <span className="pr-2.5 pb-1 pl-2 text-[14px]">DE</span>
        <Panel className="ml-1 w-[85px]">
          <span className="flex h-[25px] w-[55px] items-center justify-center bg-[#cfcfcf] text-[14px] font-bold text-black">---</span>
          <span className="h-3 w-[3px] bg-[#cfcfcf]" />
        </Panel>
        <button aria-label="Ausgeblendete Symbole" className="mr-2 flex w-[30px] justify-center text-[#e8e8e8]"><Tri dir="up" /></button>
        <div className="flex items-center gap-3">
          <svg width="19" height="20" fill="none" stroke="#fff"><path d="M1.500 3.500H4V1.500H8V3.500H10.500V17.500H1.500Z" strokeWidth="1.500" /><path d="M3 6H7V16H3Z" fill="#ddd" /><path d="M12 5H18V9L15 12 12 9ZM13.500 5V1M16.500 5V1M15 12V19" fill="#fff" /></svg>
          <svg width="16" height="18" fill="#fff"><path d="M0 14H2V17H0ZM3 11H5V17H3ZM6 8H8V17H6ZM9 5H11V17H9ZM12 2H14V17H12Z" /></svg>
          <svg width="20" height="22"><path d="M1 7H4L10 1V18L4 13H1Z" fill="#fff" /><circle cx="13" cy="15" r="5.500" fill="#d52b2b" stroke="#fff" /><path d="M9.500 11.500 16.500 18.500" stroke="#fff" strokeWidth="1.500" /></svg>
          <svg width="18" height="20" fill="#fff"><path d="M1 1H3V19H1ZM3 2H9L10 4H17L15 8 17 12H10L9 10H3Z" /></svg>
        </div>
        <div className="flex w-[105px] flex-col items-center pl-2 text-[14px] leading-[22px]"><time>09:51</time><time>16.09.2013</time></div>
        <button aria-label="Desktop anzeigen" className="h-full w-3.5 border border-[#69767d] bg-linear-to-b from-[#57656d] to-[#1a262c]" />
      </div>
    </footer>
  );
}

export default function App() {
  return (
    <div className="flex h-screen flex-col overflow-hidden bg-[#24434f] font-['Open_Sans','Noto_Sans',sans-serif] text-black">
      <TitleBar />
      <div className="flex min-h-0 grow flex-col border-x-2 border-b-2 border-[#2c4a56] border-l-[#5b6f78]">
        <MenuArea />
        <div className="flex min-h-0 grow">
          <Diagram />
          <VerticalScroll />
        </div>
        <StatusBar />
      </div>
      <Taskbar />
    </div>
  );
}
